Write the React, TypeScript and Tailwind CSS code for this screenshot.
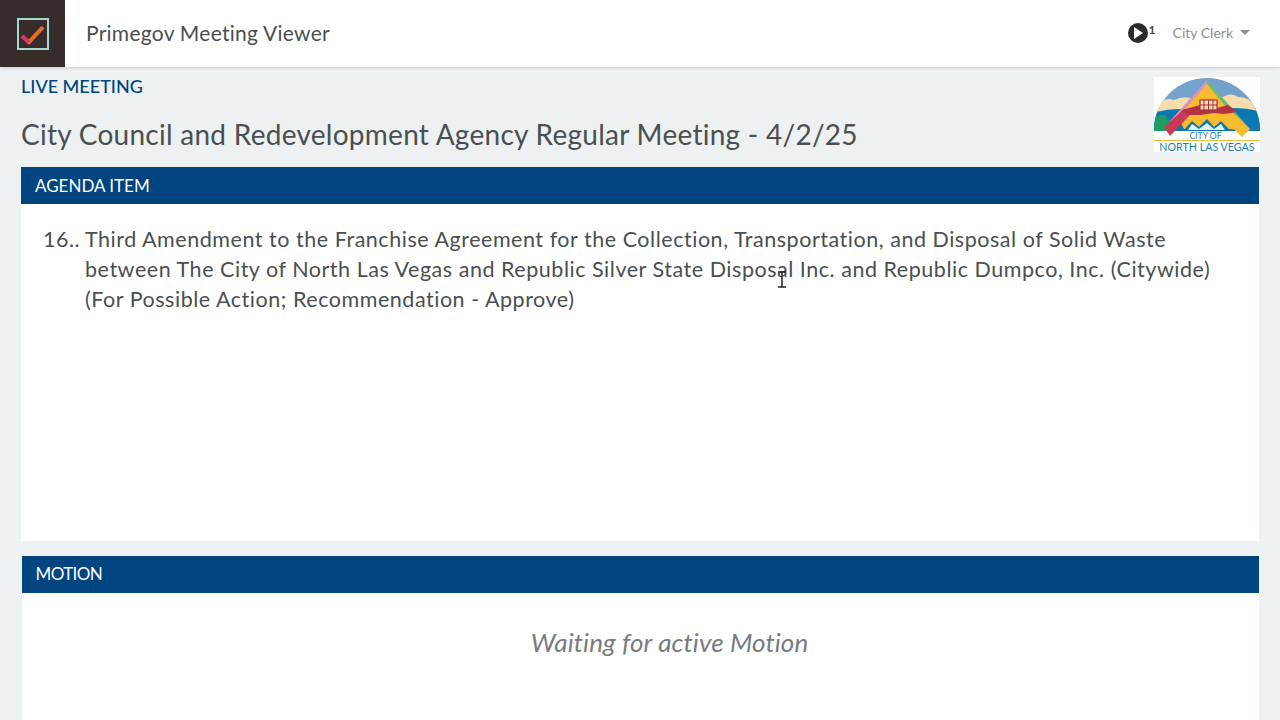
function CheckLogo() {
  return (
    <svg width="32" height="32" viewBox="0 0 32 32">
      <rect x="1" y="1" width="30" height="30" fill="none" stroke="#a5d6d0" strokeWidth="2" />
      <path d="M10 22 L12 24 L26 9" fill="none" stroke="#ee6a2b" strokeWidth="4" />
      <path d="M5 18 L12 24.5" fill="none" stroke="#d9386c" strokeWidth="4" />
    </svg>
  );
}

function CityLogo() {
  return (
    <div className="w-[106px] h-[75px] bg-white shrink-0">
      <svg width="106" height="75" viewBox="0 0 106 75">
        <defs>
          <clipPath id="dome">
            <path d="M0 54 L0 53 A53 52 0 0 1 106 53 L106 54 Z" />
          </clipPath>
        </defs>
        <g clipPath="url(#dome)">
          <rect x="0" y="0" width="106" height="54" fill="#74a2cc" />
          {/* water and hills */}
          <rect x="0" y="30" width="106" height="24" fill="#0b78b4" />
          <path d="M0 42 Q6 36 12 39 L22 54 L0 54 Z" fill="#1f9c63" />
          {/* clouds */}
          <path d="M4 26 Q12 20 20 23 Q30 18 40 22 L46 30 L38 33 Q20 30 2 35 Z" fill="#f7dcae" />
          <path d="M66 22 Q76 14 84 20 Q94 19 102 30 L104 34 Q86 29 70 32 Z" fill="#f7dcae" />
        </g>
        {/* triangle arms */}
        <path d="M53 3 L16 44 L21 48 L53 9 Z" fill="#d890c8" />
        <path d="M53 3 L96 52 L92 56 L53 9 Z" fill="#6dbb6f" />
        <path d="M53 7 L24 40 L30 52 L76 52 L92 54 Z" fill="#fbbb2e" />
        {/* lower zigzag */}
        <path d="M30 53 L38 44 L45 50 L53 42 L60 50 L67 44 L76 53 Z" fill="#0b78b4" />
        <path d="M38 47 L45 52 L53 46 L60 52 L67 47 L71 53 L34 53 Z" fill="#dff0ee" />
        {/* right arm */}
        <path d="M96 52 L88 60 L68 40 L76 33 Z" fill="#fbbb2e" />
        {/* left red band */}
        <path d="M10 50 L30 32 L38 33 L36 38 L16 59 Z" fill="#c83a55" />
        {/* mountain band */}
        <path d="M28 33 L46 28 L60 32 L74 28 L84 35 L70 37 L60 36 L46 38 L34 38 Z" fill="#b33246" />
        {/* building */}
        <rect x="46" y="23" width="17" height="10" fill="#f7dcae" stroke="#a82e42" strokeWidth="1.2" />
        <path d="M50 23 V33 M54.5 23 V33 M59 23 V33 M46 28 H63" stroke="#a82e42" strokeWidth="1" />
        {/* name */}
        <text x="51.5" y="61.7" textAnchor="middle" fontSize="8.6" fill="#1f7fa8" fontFamily="Lato, sans-serif">CITY OF</text>
        <rect x="0" y="63" width="106" height="1" fill="#f7bb3a" />
        <text x="53" y="73.5" textAnchor="middle" fontSize="10.7" fill="#1f7fa8" fontFamily="Lato, sans-serif">NORTH LAS VEGAS</text>
      </svg>
    </div>
  );
}

export default function App() {
  return (
    <div className="h-[720px] overflow-hidden bg-[#eef1f1] font-['Lato','Noto_Sans',sans-serif] relative">
      {/* Header */}
      <header className="h-[67px] bg-white flex items-center shadow-[0_1px_3px_rgba(0,0,0,0.15)] relative">
        <div className="w-[65px] h-full bg-[#382c2b] flex items-center justify-center">
          <CheckLogo />
        </div>
        <div className="ml-[21px] -mt-[2px] text-[21px] text-[#4a4f52] tracking-[0.26px]">Primegov Meeting Viewer</div>
        <div className="ml-auto mr-[30px] -mt-[2px] flex items-center">
          <div className="w-5 h-5 rounded-full bg-[#2b2b2b] flex items-center justify-center">
            <div className="ml-[2px] w-0 h-0 border-y-[6px] border-y-transparent border-l-[9px] border-l-white" />
          </div>
          <span className="text-[12px] font-bold text-[#444] -mt-[6px] ml-[1px] mr-[17px] leading-none">1</span>
          <span className="text-[14px] text-[#8a8f92]">City Clerk</span>
          <div className="ml-[7px] w-0 h-0 border-x-[5px] border-x-transparent border-t-[5px] border-t-[#8a8f92]" />
        </div>
      </header>

      {/* Title row */}
      <div className="flex justify-between pl-[21px] pr-[20px] h-[100px]">
        <div>
          <div className="mt-[7px] text-[18px] leading-[24px] font-medium text-[#004480]">LIVE MEETING</div>
          <h1 className="mt-[18px] text-[28px] leading-[36px] text-[#4a4f52] tracking-[0.27px]">
            City Council and Redevelopment Agency Regular Meeting - 4/2/25
          </h1>
        </div>
        <div className="pt-[10px]">
          <CityLogo />
        </div>
      </div>

      {/* Agenda item */}
      <section className="mx-[21px]">
        <div className="h-[37px] bg-[#004480] text-white text-[17px] flex items-center px-[14px]">AGENDA ITEM</div>
        <div className="h-[337px] bg-white pt-[20px] pl-[22px] pr-[40px] flex text-[21.5px] leading-[30px] text-[#4a4f52] tracking-[0.53px]">
          <span className="w-[42px] shrink-0">16..</span>
          <p>
            Third Amendment to the Franchise Agreement for the Collection, Transportation, and Disposal of Solid Waste
            between The City of North Las Vegas and Republic Silver State Disposal Inc. and Republic Dumpco, Inc. (Citywide)
            (For Possible Action; Recommendation - Approve)
          </p>
        </div>
      </section>

      {/* Motion */}
      <section className="ml-[22px] mr-[21px] mt-[15px]">
        <div className="h-[37px] bg-[#004480] text-white text-[17px] tracking-[-0.6px] flex items-center pl-[13.5px] pb-[1px]">MOTION</div>
        <div className="h-[200px] bg-white pt-[31px] pl-[58px] text-center text-[26px] leading-[36px] italic text-[#767c7f] tracking-[0.1px]">
          Waiting for active Motion
        </div>
      </section>

      {/* Mouse cursor */}
      <svg className="absolute left-[776px] top-[271px]" width="12" height="18" viewBox="0 0 12 18">
        <path d="M2 1 H10 M6 1 V16 M2 16 H10" stroke="#222" strokeWidth="1.5" fill="none" />
      </svg>
    </div>
  );
}
